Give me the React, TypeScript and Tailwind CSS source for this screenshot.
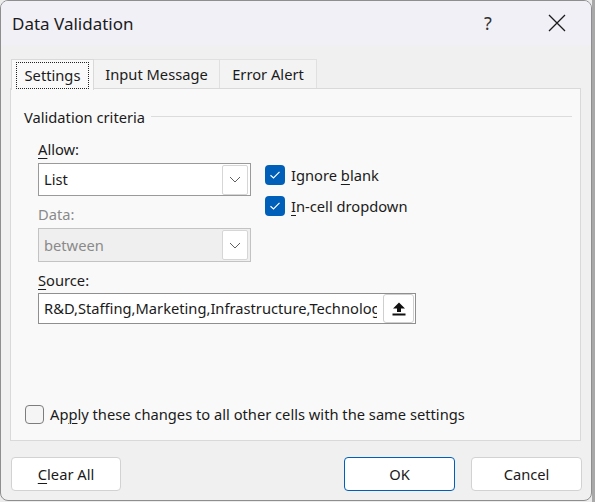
import React from "react";

const font = { fontFamily: '"Noto Sans", "Segoe UI", sans-serif' };

function Chevron() {
  return (
    <svg width="12" height="7" viewBox="0 0 12 7" fill="none">
      <path d="M1 1 L6 6 L11 1" stroke="#606060" strokeWidth="1" />
    </svg>
  );
}

function Check() {
  return (
    <svg width="12" height="10" viewBox="0 0 12 10" fill="none">
      <path d="M1.5 5.2 L4.5 8 L10.5 1.8" stroke="#ffffff" strokeWidth="1.2" />
    </svg>
  );
}

function CheckedBox() {
  return (
    <div className="w-[20px] h-[20px] rounded-[4px] bg-[#005fb8] flex items-center justify-center shrink-0">
      <Check />
    </div>
  );
}

function U({ children }: { children: React.ReactNode }) {
  return <span className="underline underline-offset-[3px] decoration-1">{children}</span>;
}

export default function App() {
  return (
    <div className="w-[595px] h-[502px] bg-[#ececec] flex text-[#1b1b1b]" style={font}>
      <div className="w-[592px] h-[501px] rounded-[8px] border border-[#8e8e8e] overflow-hidden flex flex-col bg-[#f0f0f0]">
        {/* title bar */}
        <div className="h-[44px] bg-[#f2f0f7] flex items-center shrink-0">
          <div className="pl-[11px] text-[17px] leading-none pt-[1px]">Data Validation</div>
          <div className="ml-auto flex items-center">
            <div className="w-[24px] text-center text-[18px] leading-none text-[#333] mr-[45px]">?</div>
            <div className="w-[24px] h-[24px] flex items-center justify-center mr-[22px]">
              <svg width="18" height="18" viewBox="0 0 18 18" fill="none">
                <path d="M1 1 L17 17 M17 1 L1 17" stroke="#1b1b1b" strokeWidth="1.3" />
              </svg>
            </div>
          </div>
        </div>

        {/* tabs */}
        <div className="flex pl-[10px] pt-[14px] h-[44px] shrink-0 text-[14.7px]">
          <div className="w-[83px] h-[31px] bg-[#f9f9f9] border border-b-0 border-[#d9d9d9] flex items-center justify-center relative z-10">
            <div className="border border-dotted border-[#222] px-[8px] h-[27px] flex items-center">Settings</div>
          </div>
          <div className="w-[126px] h-[30px] bg-[#f3f3f3] border-t border-r border-[#e0e0e0] flex items-center justify-center">
            Input Message
          </div>
          <div className="w-[97px] h-[30px] bg-[#f3f3f3] border-t border-r border-[#e0e0e0] flex items-center justify-center">
            Error Alert
          </div>
        </div>

        {/* panel */}
        <div className="ml-[9px] w-[571px] h-[353px] bg-[#f9f9f9] border border-[#d9d9d9] -mt-[1px] flex flex-col text-[14.7px] shrink-0">
          <div className="flex items-center pt-[18px] pl-[13px] h-[38px]">
            <span className="leading-[20px]">Validation criteria</span>
            <div className="flex-1 h-px bg-[#dcdcdc] ml-[6px] mr-[8px] -mt-[2px]" />
          </div>

          <div className="flex pl-[27px]">
            <div className="w-[213px] flex flex-col">
              <div className="mt-[12px] leading-[20px]"><U>A</U>llow:</div>
              <div className="mt-[4px] h-[33px] bg-white border border-[#9a9a9a] flex items-center pl-[5px] pr-[2px]">
                <span>List</span>
                <div className="ml-auto w-[26px] h-[30px] border border-[#d6d6d6] rounded-[2px] bg-white flex items-center justify-center">
                  <Chevron />
                </div>
              </div>
              <div className="mt-[8px] leading-[20px] text-[#8a8a8a]">Data:</div>
              <div className="mt-[4px] h-[34px] bg-[#efefef] border border-[#c3c3c3] flex items-center pl-[5px] pr-[2px] text-[#8a8a8a]">
                <span>between</span>
                <div className="ml-auto w-[26px] h-[30px] border border-[#d6d6d6] rounded-[2px] bg-white flex items-center justify-center">
                  <Chevron />
                </div>
              </div>
            </div>
            <div className="ml-[14px] pt-[38px] flex flex-col gap-[11px]">
              <div className="flex items-center h-[20px]">
                <CheckedBox />
                <span className="ml-[6px]">Ignore <U>b</U>lank</span>
              </div>
              <div className="flex items-center h-[20px]">
                <CheckedBox />
                <span className="ml-[6px]"><U>I</U>n-cell dropdown</span>
              </div>
            </div>
          </div>

          <div className="pl-[27px] mt-[8px] leading-[20px]"><U>S</U>ource:</div>
          <div className="ml-[27px] mt-[3px] w-[378px] h-[31px] bg-white border border-[#8f8f8f] flex items-center pl-[5px] pr-[1px]">
            <div className="flex-1 overflow-hidden whitespace-nowrap">R&amp;D,Staffing,Marketing,Infrastructure,Technology</div>
            <div className="w-[31px] h-[29px] border border-[#cfcfcf] rounded-[3px] bg-white flex items-center justify-center ml-[6px]">
              <svg width="14" height="14" viewBox="0 0 14 14">
                <path d="M7 0.5 L13 6.5 L9 6.5 L9 10 L5 10 L5 6.5 L1 6.5 Z" fill="#111" />
                <rect x="0.5" y="11.5" width="13" height="2" fill="#111" />
              </svg>
            </div>
          </div>

          <div className="mt-[80px] pl-[14px] flex items-center h-[20px]">
            <div className="w-[19px] h-[19px] rounded-[4px] border border-[#7d7d7d] bg-[#f5f5f5] shrink-0" />
            <span className="ml-[6px]">Ap<U>p</U>ly these changes to all other cells with the same settings</span>
          </div>
        </div>

        {/* buttons */}
        <div className="flex mt-[16px] pl-[10px] text-[14.7px]">
          <div className="w-[110px] h-[34px] bg-white border border-[#d2d2d2] rounded-[4px] flex items-center justify-center">
            <span><U>C</U>lear All</span>
          </div>
          <div className="ml-auto w-[111px] h-[34px] bg-white border border-[#005fb8] rounded-[4px] flex items-center justify-center">
            OK
          </div>
          <div className="ml-[16px] mr-[9px] w-[111px] h-[34px] bg-white border border-[#d2d2d2] rounded-[4px] flex items-center justify-center">
            Cancel
          </div>
        </div>
      </div>
      <div className="w-[3px] h-full bg-[#a8a8a8]" />
    </div>
  );
}
